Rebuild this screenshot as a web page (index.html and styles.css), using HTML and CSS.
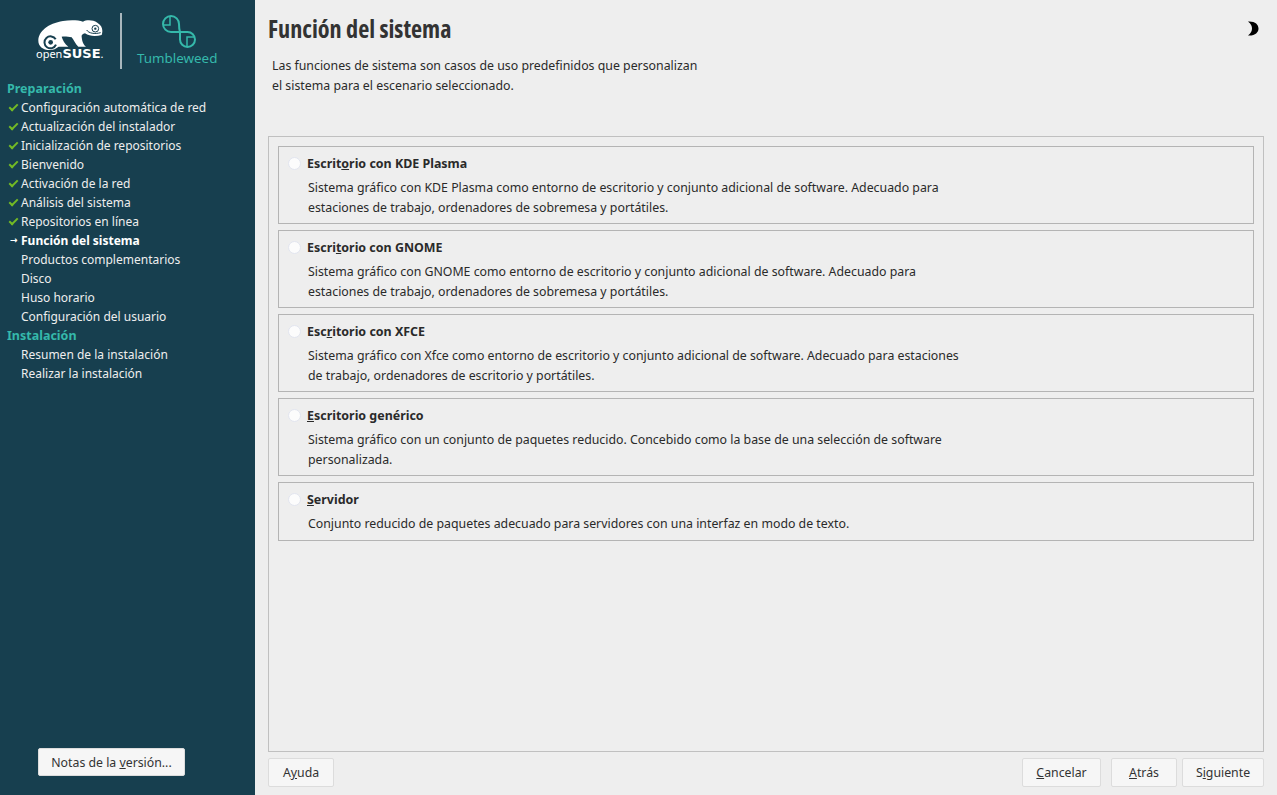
FILE: index.html
```html
<!DOCTYPE html>
<html lang="es">
<head>
    <meta charset="UTF-8">
    <title>Función del sistema</title>
    <link rel="stylesheet" href="styles.css">
</head>
<body>

<div class="sidebar">
    <div class="logo-row">
        <div class="logo-suse">
            <svg class="gecko" width="66" height="32" viewBox="0 0 198 96">
                <path fill="#fff" d="M36 90C14 90 1 78 1 62C1 35 30 10 75 3C95 0 120 0 135 5C145 -1 165 -1 178 8C192 16 196 30 191 45C175 50 155 50 141 40C133 42 130 46 131 50C132 60 134 72 144 80L121 80C112 72 108 60 101 52C92 50 80 49 71 50C74 60 80 72 91 80L62 80C54 86 46 90 36 90Z"/>
                <path fill="none" stroke="#173f4f" stroke-width="6" d="M53 58A18 18 0 1 0 54 74"/>
                <circle cx="38" cy="67" r="7" fill="#173f4f"/>
                <circle cx="172" cy="26" r="10" fill="none" stroke="#173f4f" stroke-width="3"/>
                <circle cx="172" cy="26" r="3.500" fill="#173f4f"/>
                <path fill="none" stroke="#173f4f" stroke-width="3" d="M146 30C152 40 170 43 188 38"/>
            </svg>
            <div class="logo-text">open<b>SUSE</b><span class="dot">.</span></div>
        </div>
        <div class="logo-sep"></div>
        <div class="logo-tw">
            <svg width="34" height="34" viewBox="0 0 34 34">
                <path fill="none" stroke="#35b9ab" stroke-width="2" d="M18 18H9A8 8 0 1 1 17 10C17 13 17 15 18 18ZM18 18C21 18 23 18 25.500 18A7.500 7.500 0 1 1 18 25.500Z"/>
                <path fill="none" stroke="#35b9ab" stroke-width="1.500" d="M8 2V11H1M25 33V23H33"/>
            </svg>
            <div class="tw-text">Tumbleweed</div>
        </div>
    </div>

    <ul class="steps">
        <li class="stage">Preparación</li>
        <li class="done">Configuración automática de red</li>
        <li class="done">Actualización del instalador</li>
        <li class="done">Inicialización de repositorios</li>
        <li class="done">Bienvenido</li>
        <li class="done">Activación de la red</li>
        <li class="done">Análisis del sistema</li>
        <li class="done">Repositorios en línea</li>
        <li class="current">Función del sistema</li>
        <li>Productos complementarios</li>
        <li>Disco</li>
        <li>Huso horario</li>
        <li>Configuración del usuario</li>
        <li class="stage">Instalación</li>
        <li>Resumen de la instalación</li>
        <li>Realizar la instalación</li>
    </ul>

    <div class="notes-wrap">
        <button class="notes-btn">Notas de la <u>v</u>ersión...</button>
    </div>
</div>

<div class="main">
    <div class="title-row">
        <h2>Función del sistema</h2>
        <svg class="moon" width="11" height="15" viewBox="0 0 11 15">
            <path fill="#000" d="M0 0.500C7 0 10.500 3.500 10.500 7.500C10.500 11.500 7 15 0 14.500C3 12 4 10 4 7.500C4 5 3 3 0 0.500Z"/>
        </svg>
    </div>
    <p class="intro">Las funciones de sistema son casos de uso predefinidos que personalizan<br>el sistema para el escenario seleccionado.</p>

    <div class="roles">
        <div class="role">
            <div class="role-head"><span class="radio"></span>Escrit<u>o</u>rio con KDE Plasma</div>
            <p>Sistema gráfico con KDE Plasma como entorno de escritorio y conjunto adicional de software. Adecuado para<br>estaciones de trabajo, ordenadores de sobremesa y portátiles.</p>
        </div>
        <div class="role">
            <div class="role-head"><span class="radio"></span>Escri<u>t</u>orio con GNOME</div>
            <p>Sistema gráfico con GNOME como entorno de escritorio y conjunto adicional de software. Adecuado para<br>estaciones de trabajo, ordenadores de sobremesa y portátiles.</p>
        </div>
        <div class="role">
            <div class="role-head"><span class="radio"></span>Esc<u>r</u>itorio con XFCE</div>
            <p>Sistema gráfico con Xfce como entorno de escritorio y conjunto adicional de software. Adecuado para estaciones<br>de trabajo, ordenadores de escritorio y portátiles.</p>
        </div>
        <div class="role">
            <div class="role-head"><span class="radio"></span><u>E</u>scritorio genérico</div>
            <p>Sistema gráfico con un conjunto de paquetes reducido. Concebido como la base de una selección de software<br>personalizada.</p>
        </div>
        <div class="role">
            <div class="role-head"><span class="radio"></span><u>S</u>ervidor</div>
            <p>Conjunto reducido de paquetes adecuado para servidores con una interfaz en modo de texto.</p>
        </div>
    </div>

    <div class="btn-container">
        <button class="btn-help">A<u>y</u>uda</button>
        <div class="spacer"></div>
        <button class="btn-cancel"><u>C</u>ancelar</button>
        <button class="btn-back"><u>A</u>trás</button>
        <button class="btn-next">S<u>i</u>guiente</button>
    </div>
</div>

</body>
</html>
```

FILE: styles.css
```css
html, body {
    height: 100%;
}
body {
    margin: 0;
    display: flex;
    height: 795px;
    overflow: hidden;
    background: #eeeeee;
    color: #2a2a2a;
    font-family: "Noto Sans", Arial, sans-serif;
    font-size: 12.33px;
}
button {
    font-family: inherit;
    font-size: 12.3px;
    color: #333;
    background: #f6f6f6;
    border: 1px solid #dcdcdc;
    border-radius: 2px;
    height: 29px;
    padding: 0;
}
.sidebar {
    width: 255px;
    flex-shrink: 0;
    background: #173f4f;
    display: flex;
    flex-direction: column;
    color: #eeeeee;
    font-size: 12px;
}
.logo-row {
    display: flex;
    height: 69px;
    padding-top: 13px;
    box-sizing: border-box;
    align-items: flex-start;
}
.logo-suse {
    margin-left: 35px;
    width: 70px;
    padding-top: 7px;
}
.gecko {
    display: block;
    margin-left: 3px;
}
.logo-text {
    font-size: 11px;
    line-height: 12px;
    color: #fff;
    white-space: nowrap;
    margin-top: -4px;
    margin-left: 1px;
}
.logo-text b {
    font-family: "DejaVu Sans", sans-serif;
    font-size: 13px;
}
.logo-sep {
    width: 2px;
    height: 56px;
    background: #a9b7bd;
    margin-left: 15px;
}
.logo-tw {
    margin-left: 15px;
}
.logo-tw svg {
    display: block;
    margin: 1px 0 0 25px;
}
.tw-text {
    color: #35b9ab;
    font-size: 13.4px;
    line-height: 18px;
    margin-top: 1px;
}
.steps {
    list-style: none;
    margin: 10px 0 0;
    padding: 0;
}
.steps li {
    height: 19px;
    line-height: 19px;
    padding-left: 21px;
    white-space: nowrap;
    position: relative;
}
.steps .stage {
    padding-left: 7px;
    font-size: 12.5px;
    font-weight: bold;
    color: #35b9ab;
}
.steps .done::before {
    content: "";
    position: absolute;
    left: 9px;
    top: 6px;
    width: 7px;
    height: 3px;
    border-left: 2px solid #73ba25;
    border-bottom: 2px solid #73ba25;
    transform: rotate(-45deg);
}
.steps .current {
    font-weight: bold;
    color: #fff;
}
.steps .current::before {
    content: "→";
    position: absolute;
    left: 10px;
    font-family: "DejaVu Sans", sans-serif;
    font-size: 9px;
}
.notes-wrap {
    margin-top: auto;
    padding: 0 0 19px 38px;
}
.notes-btn {
    width: 147px;
    height: 28px;
}
.main {
    flex: 1;
    min-width: 0;
    padding: 0 13px 8px;
    display: flex;
    flex-direction: column;
}
.title-row {
    display: flex;
    align-items: center;
    justify-content: space-between;
    height: 56px;
}
h2 {
    margin: 0;
    font-family: "Open Sans", "Liberation Sans", sans-serif;
    font-stretch: 75%;
    font-size: 24.2px;
    font-weight: bold;
    color: #333;
}
.moon {
    margin: 1px 5px 0 0;
}
.intro {
    margin: 0 0 0 4px;
    line-height: 20px;
    height: 80px;
}
.roles {
    flex: 1;
    border: 1px solid #c0c0c0;
    padding: 9px;
    display: flex;
    flex-direction: column;
    gap: 6px;
}
.role {
    border: 1px solid #b4b4b4;
    padding: 7px 0 5px 29px;
}
.role:last-child {
    padding-bottom: 6px;
}
.role-head {
    font-size: 12.45px;
    font-weight: bold;
    line-height: 19px;
    position: relative;
    margin-left: -1px;
}
.radio {
    position: absolute;
    left: -19px;
    top: 3px;
    width: 11px;
    height: 11px;
    border-radius: 50%;
    background: #fcfcfc;
    border: 1px solid #e2e5ef;
}
.role p {
    margin: 5px 0 0;
    line-height: 20px;
}
.btn-container {
    display: flex;
    gap: 5px;
    margin-top: 6px;
}
.btn-help {
    width: 66px;
}
.btn-cancel {
    width: 79px;
    margin-right: 5px;
}
.btn-back {
    width: 66px;
}
.btn-next {
    width: 82px;
}
.spacer {
    flex: 1;
}
```
